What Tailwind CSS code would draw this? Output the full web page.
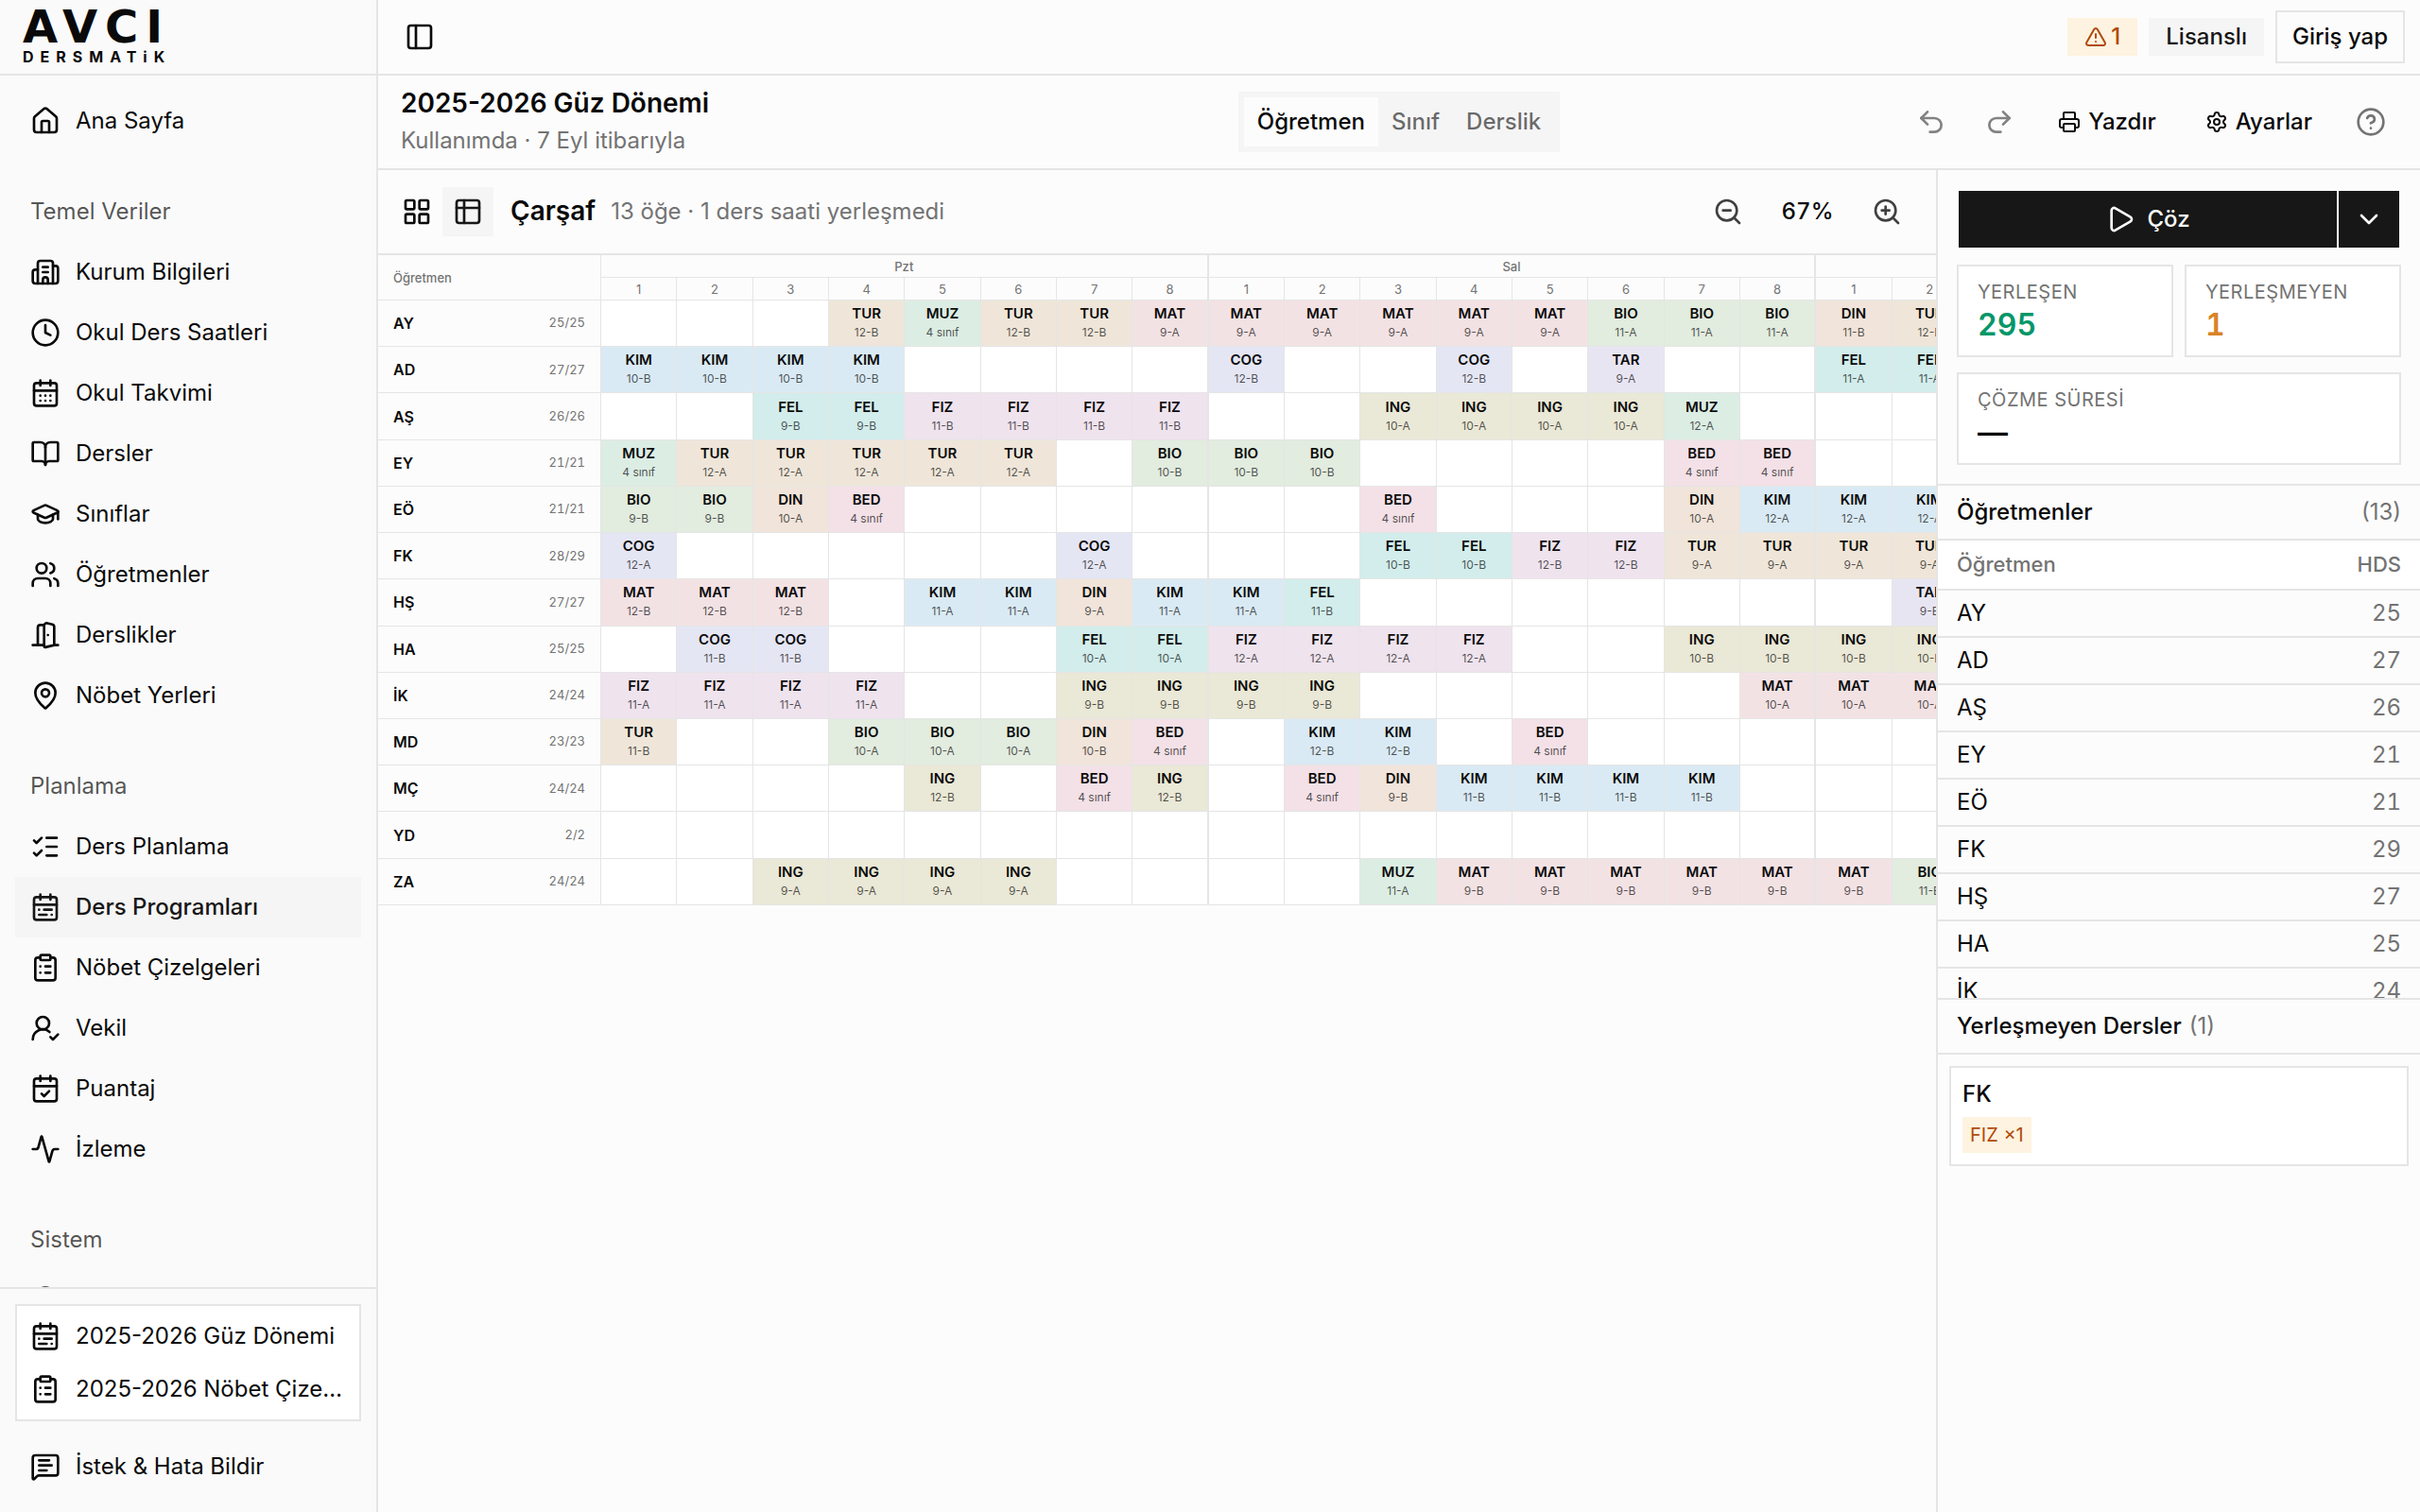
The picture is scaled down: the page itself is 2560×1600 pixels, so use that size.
<!DOCTYPE html>
<html lang="tr">
<head>
  <meta charset="UTF-8" />
  <meta name="viewport" content="width=device-width, initial-scale=1.0" />
  <title>Avcı Dersmatik - Ders Programları</title>
  <script src="https://cdn.jsdelivr.net/npm/@tailwindcss/browser@4"></script>
</head>
<body class="flex h-screen overflow-hidden bg-[#fcfcfc] font-['Inter',sans-serif] text-2xl text-neutral-950">

  <!-- Icon sprite -->
  <svg class="hidden">
    <symbol id="i-home" viewBox="0 0 24 24"><path d="M15 21v-8a1 1 0 0 0-1-1h-4a1 1 0 0 0-1 1v8" /><path d="M3 10a2 2 0 0 1 .709-1.528l7-6a2 2 0 0 1 2.582 0l7 6A2 2 0 0 1 21 10v9a2 2 0 0 1-2 2H5a2 2 0 0 1-2-2z" /></symbol>
    <symbol id="i-building" viewBox="0 0 24 24"><path d="M10 12h4" /><path d="M10 8h4" /><path d="M14 21v-3a2 2 0 0 0-4 0v3" /><path d="M6 10H4a2 2 0 0 0-2 2v7a2 2 0 0 0 2 2h16a2 2 0 0 0 2-2V9a2 2 0 0 0-2-2h-2" /><path d="M6 21V5a2 2 0 0 1 2-2h8a2 2 0 0 1 2 2v16" /></symbol>
    <symbol id="i-clock" viewBox="0 0 24 24"><circle cx="12" cy="12" r="10" /><path d="M12 6v6l4 2" /></symbol>
    <symbol id="i-calendar-days" viewBox="0 0 24 24"><path d="M8 2v4M16 2v4M3 10h18" /><rect x="3" y="4" width="18" height="18" rx="2" /><path d="M8 14h.01M12 14h.01M16 14h.01M8 18h.01M12 18h.01M16 18h.01" /></symbol>
    <symbol id="i-book" viewBox="0 0 24 24"><path d="M12 7v14" /><path d="M3 18a1 1 0 0 1-1-1V4a1 1 0 0 1 1-1h5a4 4 0 0 1 4 4 4 4 0 0 1 4-4h5a1 1 0 0 1 1 1v13a1 1 0 0 1-1 1h-6a3 3 0 0 0-3 3 3 3 0 0 0-3-3z" /></symbol>
    <symbol id="i-cap" viewBox="0 0 24 24"><path d="M21.42 10.922a1 1 0 0 0-.019-1.838L12.83 5.18a2 2 0 0 0-1.66 0L2.6 9.08a1 1 0 0 0 0 1.832l8.57 3.908a2 2 0 0 0 1.66 0z" /><path d="M22 10v6" /><path d="M6 12.5V16a6 3 0 0 0 12 0v-3.5" /></symbol>
    <symbol id="i-users" viewBox="0 0 24 24"><path d="M16 21v-2a4 4 0 0 0-4-4H6a4 4 0 0 0-4 4v2" /><path d="M16 3.128a4 4 0 0 1 0 7.744" /><path d="M22 21v-2a4 4 0 0 0-3-3.87" /><circle cx="9" cy="7" r="4" /></symbol>
    <symbol id="i-door" viewBox="0 0 24 24"><path d="M11 20H2" /><path d="M11 4.562v16.157a1 1 0 0 0 1.242.97L19 20V5.562a2 2 0 0 0-1.515-1.94l-4-1A2 2 0 0 0 11 4.561z" /><path d="M11 4H8a2 2 0 0 0-2 2v14" /><path d="M14 12h.01" /><path d="M22 20h-3" /></symbol>
    <symbol id="i-pin" viewBox="0 0 24 24"><path d="M20 10c0 4.993-5.539 10.193-7.399 11.799a1 1 0 0 1-1.202 0C9.539 20.193 4 14.993 4 10a8 8 0 0 1 16 0" /><circle cx="12" cy="10" r="3" /></symbol>
    <symbol id="i-list-checks" viewBox="0 0 24 24"><path d="M13 5h8M13 12h8M13 19h8" /><path d="m3 17 2 2 4-4" /><path d="m3 7 2 2 4-4" /></symbol>
    <symbol id="i-calendar-range" viewBox="0 0 24 24"><rect x="3" y="4" width="18" height="18" rx="2" /><path d="M16 2v4M3 10h18M8 2v4" /><path d="M17 14h-6M13 18H7M7 14h.01M17 18h.01" /></symbol>
    <symbol id="i-clipboard" viewBox="0 0 24 24"><rect x="8" y="2" width="8" height="4" rx="1" /><path d="M16 4h2a2 2 0 0 1 2 2v14a2 2 0 0 1-2 2H6a2 2 0 0 1-2-2V6a2 2 0 0 1 2-2h2" /><path d="M12 11h4M12 16h4M8 11h.01M8 16h.01" /></symbol>
    <symbol id="i-user-check" viewBox="0 0 24 24"><path d="M2 21a8 8 0 0 1 13.292-6" /><circle cx="10" cy="8" r="5" /><path d="m16 19 2 2 4-4" /></symbol>
    <symbol id="i-calendar-check" viewBox="0 0 24 24"><path d="M8 2v4M16 2v4M3 10h18" /><rect x="3" y="4" width="18" height="18" rx="2" /><path d="m9 16 2 2 4-4" /></symbol>
    <symbol id="i-activity" viewBox="0 0 24 24"><path d="M22 12h-2.48a2 2 0 0 0-1.93 1.46l-2.35 8.36a.25.25 0 0 1-.48 0L9.24 2.18a.25.25 0 0 0-.48 0l-2.35 8.36A2 2 0 0 1 4.49 12H2" /></symbol>
    <symbol id="i-message" viewBox="0 0 24 24"><path d="M22 17a2 2 0 0 1-2 2H6.828a2 2 0 0 0-1.414.586l-2.202 2.202A.71.71 0 0 1 2 21.286V5a2 2 0 0 1 2-2h16a2 2 0 0 1 2 2z" /><path d="M7 11h10M7 15h6M7 7h8" /></symbol>
    <symbol id="i-panel" viewBox="0 0 24 24"><rect x="3" y="3" width="18" height="18" rx="2" /><path d="M9 3v18" /></symbol>
    <symbol id="i-alert" viewBox="0 0 24 24"><path d="m21.73 18-8-14a2 2 0 0 0-3.48 0l-8 14A2 2 0 0 0 4 21h16a2 2 0 0 0 1.73-3" /><path d="M12 9v4M12 17h.01" /></symbol>
    <symbol id="i-undo" viewBox="0 0 24 24"><path d="M9 14 4 9l5-5" /><path d="M4 9h10.5a5.5 5.5 0 0 1 0 11H11" /></symbol>
    <symbol id="i-redo" viewBox="0 0 24 24"><path d="m15 14 5-5-5-5" /><path d="M20 9H9.500a5.500 5.500 0 0 0 0 11H13" /></symbol>
    <symbol id="i-printer" viewBox="0 0 24 24"><path d="M6 18H4a2 2 0 0 1-2-2v-5a2 2 0 0 1 2-2h16a2 2 0 0 1 2 2v5a2 2 0 0 1-2 2h-2" /><path d="M6 9V3a1 1 0 0 1 1-1h10a1 1 0 0 1 1 1v6" /><rect x="6" y="14" width="12" height="8" rx="1" /></symbol>
    <symbol id="i-settings" viewBox="0 0 24 24"><path d="M9.671 4.136a2.34 2.34 0 0 1 4.659 0 2.34 2.34 0 0 0 3.319 1.915 2.34 2.34 0 0 1 2.33 4.033 2.34 2.34 0 0 0 0 3.831 2.34 2.34 0 0 1-2.33 4.033 2.34 2.34 0 0 0-3.319 1.915 2.34 2.34 0 0 1-4.659 0 2.34 2.34 0 0 0-3.32-1.915 2.34 2.34 0 0 1-2.33-4.033 2.34 2.34 0 0 0 0-3.831A2.34 2.34 0 0 1 6.35 6.051a2.34 2.34 0 0 0 3.319-1.915" /><circle cx="12" cy="12" r="3" /></symbol>
    <symbol id="i-help" viewBox="0 0 24 24"><circle cx="12" cy="12" r="10" /><path d="M9.09 9a3 3 0 0 1 5.83 1c0 2-3 3-3 3" /><path d="M12 17h.01" /></symbol>
    <symbol id="i-grid" viewBox="0 0 24 24"><rect x="3" y="3" width="7" height="7" rx="1" /><rect x="14" y="3" width="7" height="7" rx="1" /><rect x="14" y="14" width="7" height="7" rx="1" /><rect x="3" y="14" width="7" height="7" rx="1" /></symbol>
    <symbol id="i-sheet" viewBox="0 0 24 24"><rect x="3" y="3" width="18" height="18" rx="2" /><path d="M9 3v18M3 9h18" /></symbol>
    <symbol id="i-zoom-out" viewBox="0 0 24 24"><circle cx="11" cy="11" r="8" /><path d="m21 21-4.340-4.340M8 11h6" /></symbol>
    <symbol id="i-zoom-in" viewBox="0 0 24 24"><circle cx="11" cy="11" r="8" /><path d="m21 21-4.340-4.340M8 11h6M11 8v6" /></symbol>
    <symbol id="i-play" viewBox="0 0 24 24"><path d="M5 5a2 2 0 0 1 3.008-1.728l11.997 6.998a2 2 0 0 1 .003 3.458l-12 7A2 2 0 0 1 5 19z" /></symbol>
    <symbol id="i-chevron" viewBox="0 0 24 24"><path d="m6 9 6 6 6-6" /></symbol>
  </svg>

  <!-- Sidebar -->
  <aside class="flex w-[400px] shrink-0 flex-col border-r-2 border-neutral-200 bg-[#fafafa]">
    <a href="#" class="flex h-20 shrink-0 flex-col border-b-2 border-neutral-200 pt-1 pl-6 font-bold">
      <span class="font-['DejaVu_Sans',sans-serif] text-5xl leading-[48px] tracking-[8px]">AVCI</span>
      <span class="text-base leading-4 tracking-[7px]">DERSMATiK</span>
    </a>

    <nav class="min-h-0 flex-1 overflow-hidden px-4 pt-4">
      <a href="#" class="flex h-16 items-center gap-4 px-4"><svg class="size-8 fill-none stroke-current stroke-2 [stroke-linecap:round] [stroke-linejoin:round]"><use href="#i-home" /></svg>Ana Sayfa</a>

      <h3 class="mt-8 flex h-16 items-center px-4 text-neutral-950/70">Temel Veriler</h3>
      <a href="#" class="flex h-16 items-center gap-4 px-4"><svg class="size-8 fill-none stroke-current stroke-2 [stroke-linecap:round] [stroke-linejoin:round]"><use href="#i-building" /></svg>Kurum Bilgileri</a>
      <a href="#" class="flex h-16 items-center gap-4 px-4"><svg class="size-8 fill-none stroke-current stroke-2 [stroke-linecap:round] [stroke-linejoin:round]"><use href="#i-clock" /></svg>Okul Ders Saatleri</a>
      <a href="#" class="flex h-16 items-center gap-4 px-4"><svg class="size-8 fill-none stroke-current stroke-2 [stroke-linecap:round] [stroke-linejoin:round]"><use href="#i-calendar-days" /></svg>Okul Takvimi</a>
      <a href="#" class="flex h-16 items-center gap-4 px-4"><svg class="size-8 fill-none stroke-current stroke-2 [stroke-linecap:round] [stroke-linejoin:round]"><use href="#i-book" /></svg>Dersler</a>
      <a href="#" class="flex h-16 items-center gap-4 px-4"><svg class="size-8 fill-none stroke-current stroke-2 [stroke-linecap:round] [stroke-linejoin:round]"><use href="#i-cap" /></svg>Sınıflar</a>
      <a href="#" class="flex h-16 items-center gap-4 px-4"><svg class="size-8 fill-none stroke-current stroke-2 [stroke-linecap:round] [stroke-linejoin:round]"><use href="#i-users" /></svg>Öğretmenler</a>
      <a href="#" class="flex h-16 items-center gap-4 px-4"><svg class="size-8 fill-none stroke-current stroke-2 [stroke-linecap:round] [stroke-linejoin:round]"><use href="#i-door" /></svg>Derslikler</a>
      <a href="#" class="flex h-16 items-center gap-4 px-4"><svg class="size-8 fill-none stroke-current stroke-2 [stroke-linecap:round] [stroke-linejoin:round]"><use href="#i-pin" /></svg>Nöbet Yerleri</a>

      <h3 class="mt-8 flex h-16 items-center px-4 text-neutral-950/70">Planlama</h3>
      <a href="#" class="flex h-16 items-center gap-4 px-4"><svg class="size-8 fill-none stroke-current stroke-2 [stroke-linecap:round] [stroke-linejoin:round]"><use href="#i-list-checks" /></svg>Ders Planlama</a>
      <a href="#" class="flex h-16 items-center gap-4 bg-neutral-100 px-4 font-medium text-neutral-900" aria-current="page"><svg class="size-8 fill-none stroke-current stroke-2 [stroke-linecap:round] [stroke-linejoin:round]"><use href="#i-calendar-range" /></svg>Ders Programları</a>
      <a href="#" class="flex h-16 items-center gap-4 px-4"><svg class="size-8 fill-none stroke-current stroke-2 [stroke-linecap:round] [stroke-linejoin:round]"><use href="#i-clipboard" /></svg>Nöbet Çizelgeleri</a>
      <a href="#" class="flex h-16 items-center gap-4 px-4"><svg class="size-8 fill-none stroke-current stroke-2 [stroke-linecap:round] [stroke-linejoin:round]"><use href="#i-user-check" /></svg>Vekil</a>
      <a href="#" class="flex h-16 items-center gap-4 px-4"><svg class="size-8 fill-none stroke-current stroke-2 [stroke-linecap:round] [stroke-linejoin:round]"><use href="#i-calendar-check" /></svg>Puantaj</a>
      <a href="#" class="flex h-16 items-center gap-4 px-4"><svg class="size-8 fill-none stroke-current stroke-2 [stroke-linecap:round] [stroke-linejoin:round]"><use href="#i-activity" /></svg>İzleme</a>

      <h3 class="mt-8 flex h-16 items-center px-4 text-neutral-950/70">Sistem</h3>
      <a href="#" class="flex h-16 items-center gap-4 px-4" aria-label="Yardım"><svg class="size-8 fill-none stroke-current stroke-2 [stroke-linecap:round] [stroke-linejoin:round]"><use href="#i-help" /></svg></a>
    </nav>

    <div class="flex flex-col gap-4 border-t-2 border-neutral-200 p-4">
      <div class="border-2 border-neutral-200 bg-white py-1">
        <a href="#" class="flex h-14 items-center gap-4 px-3.5"><svg class="size-8 shrink-0 fill-none stroke-current stroke-2 [stroke-linecap:round] [stroke-linejoin:round]"><use href="#i-calendar-range" /></svg><span class="truncate">2025-2026 Güz Dönemi</span></a>
        <a href="#" class="flex h-14 items-center gap-4 px-3.5"><svg class="size-8 shrink-0 fill-none stroke-current stroke-2 [stroke-linecap:round] [stroke-linejoin:round]"><use href="#i-clipboard" /></svg><span class="truncate">2025-2026 Nöbet Çizelgesi</span></a>
      </div>
      <a href="#" class="flex h-16 items-center gap-4 px-4"><svg class="size-8 fill-none stroke-current stroke-2 [stroke-linecap:round] [stroke-linejoin:round]"><use href="#i-message" /></svg>İstek &amp; Hata Bildir</a>
    </div>
  </aside>

  <div class="flex min-w-0 flex-1 flex-col">
    <!-- Top bar -->
    <header class="flex h-20 shrink-0 items-center gap-3 border-b-2 border-neutral-200 px-4 font-medium">
      <button class="mr-auto flex size-14 items-center justify-center" aria-label="Kenar çubuğu"><svg class="size-8 fill-none stroke-current stroke-2 [stroke-linecap:round] [stroke-linejoin:round]"><use href="#i-panel" /></svg></button>
      <button class="flex h-10 items-center gap-1 bg-[#fef3e0] px-[18px] text-[#b04a0c]"><svg class="size-6 fill-none stroke-current stroke-2 [stroke-linecap:round] [stroke-linejoin:round]"><use href="#i-alert" /></svg>1</button>
      <span class="flex h-10 items-center bg-neutral-100 px-[18px] text-neutral-900">Lisanslı</span>
      <button class="h-14 border-2 border-neutral-200 px-4">Giriş yap</button>
    </header>

    <!-- Schedule header -->
    <div class="grid h-[100px] shrink-0 grid-cols-[1fr_auto_1fr] items-center border-b-2 border-neutral-200 px-6">
      <div class="leading-10">
        <h1 class="text-[28px] leading-10 font-semibold">2025-2026 Güz Dönemi</h1>
        <p class="text-neutral-500">Kullanımda · 7 Eyl itibarıyla</p>
      </div>
      <div class="flex h-16 items-center bg-neutral-100 px-1.5 font-medium text-neutral-950/60">
        <button class="h-[52px] bg-[#fcfcfc] px-3.5 text-neutral-950">Öğretmen</button>
        <button class="h-[52px] px-3.5">Sınıf</button>
        <button class="h-[52px] px-3.5">Derslik</button>
      </div>
      <div class="-mr-1 flex items-center justify-end gap-2 font-medium">
        <button class="flex size-16 items-center justify-center opacity-50" disabled aria-label="Geri al"><svg class="size-8 fill-none stroke-current stroke-2 [stroke-linecap:round] [stroke-linejoin:round]"><use href="#i-undo" /></svg></button>
        <button class="flex size-16 items-center justify-center opacity-50" disabled aria-label="Yinele"><svg class="size-8 fill-none stroke-current stroke-2 [stroke-linecap:round] [stroke-linejoin:round]"><use href="#i-redo" /></svg></button>
        <button class="flex h-14 items-center gap-2 px-[22px]"><svg class="size-6 fill-none stroke-current stroke-2 [stroke-linecap:round] [stroke-linejoin:round]"><use href="#i-printer" /></svg>Yazdır</button>
        <button class="flex h-14 items-center gap-2 px-[22px]"><svg class="size-6 fill-none stroke-current stroke-2 [stroke-linecap:round] [stroke-linejoin:round]"><use href="#i-settings" /></svg>Ayarlar</button>
        <button class="flex size-16 items-center justify-center text-neutral-500" aria-label="Yardım"><svg class="size-8 fill-none stroke-current stroke-2 [stroke-linecap:round] [stroke-linejoin:round]"><use href="#i-help" /></svg></button>
      </div>
    </div>

    <div class="flex min-h-0 flex-1">
      <main class="flex min-w-0 flex-1 flex-col">
        <!-- View toolbar -->
        <div class="flex h-[90px] shrink-0 items-center border-b-2 border-neutral-200 pr-6 pl-3.5">
          <button class="flex h-[52px] w-[54px] items-center justify-center" aria-label="Kartlar"><svg class="size-8 fill-none stroke-current stroke-2 [stroke-linecap:round] [stroke-linejoin:round]"><use href="#i-grid" /></svg></button>
          <button class="flex h-[52px] w-[54px] items-center justify-center bg-neutral-100 text-neutral-900" aria-label="Çarşaf"><svg class="size-8 fill-none stroke-current stroke-2 [stroke-linecap:round] [stroke-linejoin:round]"><use href="#i-sheet" /></svg></button>
          <h2 class="ml-[18px] text-[28px] font-semibold">Çarşaf</h2>
          <p class="ml-4 text-neutral-500">13 öğe · 1 ders saati yerleşmedi</p>
          <div class="ml-auto flex items-center">
            <button class="flex size-14 items-center justify-center text-neutral-700" aria-label="Uzaklaştır"><svg class="size-8 fill-none stroke-current stroke-2 [stroke-linecap:round] [stroke-linejoin:round]"><use href="#i-zoom-out" /></svg></button>
            <span class="w-28 text-center font-medium tabular-nums">67%</span>
            <button class="flex size-14 items-center justify-center text-neutral-700" aria-label="Yakınlaştır"><svg class="size-8 fill-none stroke-current stroke-2 [stroke-linecap:round] [stroke-linejoin:round]"><use href="#i-zoom-in" /></svg></button>
          </div>
        </div>

        <!-- Timetable -->
        <div class="min-h-0 flex-1 overflow-hidden">
          <table class="h-[688px] w-[2164px] table-fixed border-separate border-spacing-0">
            <colgroup id="cols"><col class="w-[236px]" /></colgroup>
            <thead class="text-[13px] leading-5 text-neutral-500">
              <tr id="dayRow" class="h-6">
                <th rowspan="2" class="border-r border-b border-neutral-200 px-4 text-left font-medium">Öğretmen</th>
              </tr>
              <tr id="hourRow" class="h-6"></tr>
            </thead>
            <tbody id="timetable" class="text-center"></tbody>
          </table>
        </div>
      </main>

      <!-- Solver panel -->
      <aside class="flex w-[512px] shrink-0 flex-col border-l-2 border-neutral-200">
        <div class="flex flex-col gap-4 p-5">
          <div class="flex border-2 border-transparent font-medium text-neutral-50">
            <button class="flex h-[60px] flex-1 items-center justify-center gap-3 bg-neutral-900"><svg class="size-8 fill-none stroke-current stroke-2 [stroke-linecap:round] [stroke-linejoin:round]"><use href="#i-play" /></svg>Çöz</button>
            <button class="ml-0.5 flex h-[60px] w-16 items-center justify-center bg-neutral-900" aria-label="Çözme seçenekleri"><svg class="size-8 fill-none stroke-current stroke-2 [stroke-linecap:round] [stroke-linejoin:round]"><use href="#i-chevron" /></svg></button>
          </div>
          <dl class="grid grid-cols-2 gap-x-3 gap-y-4">
            <div class="border-2 border-neutral-200 bg-white px-5 py-3">
              <dt class="text-xl leading-[30px] tracking-wide text-neutral-500">YERLEŞEN</dt>
              <dd class="text-[32px] leading-10 font-semibold text-[#059669] tabular-nums">295</dd>
            </div>
            <div class="border-2 border-neutral-200 bg-white px-5 py-3">
              <dt class="text-xl leading-[30px] tracking-wide text-neutral-500">YERLEŞMEYEN</dt>
              <dd class="text-[32px] leading-10 font-semibold text-[#d98328] tabular-nums">1</dd>
            </div>
            <div class="col-span-2 border-2 border-neutral-200 bg-white px-5 py-3">
              <dt class="text-xl leading-[30px] tracking-wide text-neutral-500">ÇÖZME SÜRESİ</dt>
              <dd class="text-[32px] leading-10 font-semibold tabular-nums">—</dd>
            </div>
          </dl>
        </div>

        <section class="flex min-h-0 flex-1 flex-col border-t-2 border-neutral-200">
          <h3 class="flex h-[58px] shrink-0 items-center justify-between border-b-2 border-neutral-200 px-5 font-medium">Öğretmenler <span class="font-normal text-neutral-500">(13)</span></h3>
          <div class="min-h-0 flex-1 overflow-hidden">
            <table class="w-full border-separate border-spacing-0">
              <thead class="bg-white text-[22px] text-neutral-500">
                <tr class="h-[53px]">
                  <th class="border-b-2 border-neutral-200 px-5 text-left font-medium">Öğretmen</th>
                  <th class="border-b-2 border-neutral-200 px-5 text-right font-medium">HDS</th>
                </tr>
              </thead>
              <tbody id="teachers"></tbody>
            </table>
          </div>
        </section>

        <section class="flex min-h-0 flex-1 flex-col border-t-2 border-neutral-200">
          <h3 class="flex h-[58px] shrink-0 items-center gap-2 border-b-2 border-neutral-200 px-5 font-medium">Yerleşmeyen Dersler <span class="font-normal text-neutral-500">(1)</span></h3>
          <div class="p-3">
            <div class="flex flex-col items-start gap-2 border-2 border-neutral-200 bg-white p-3">
              <p class="leading-8 font-medium">FK</p>
              <span class="bg-[#fef3e0] px-2 text-xl leading-[38px] text-[#b04a0c]">FIZ ×1</span>
            </div>
          </div>
        </section>
      </aside>
    </div>
  </div>

  <script>
    const DAYS = ['Pzt', 'Sal', 'Çar'];
    const HOURS = 8;

    const LESSON_BG = {
      TUR: 'bg-[#efe6d9]',
      MUZ: 'bg-[#dcede4]',
      MAT: 'bg-[#f3e2e4]',
      BIO: 'bg-[#e2ecdf]',
      KIM: 'bg-[#daeaf4]',
      COG: 'bg-[#e5e6f4]',
      TAR: 'bg-[#e8e5f3]',
      FEL: 'bg-[#d2edeb]',
      FIZ: 'bg-[#efe3ee]',
      ING: 'bg-[#eae8d6]',
      DIN: 'bg-[#f1e4da]',
      BED: 'bg-[#f3e1e7]'
    };

    // blocks: [first slot, slot count, lesson, class]
    const teachers = [
      { name: 'AY', placed: 25, total: 25, blocks: [[4, 1, 'TUR', '12-B'], [5, 1, 'MUZ', '4 sınıf'], [6, 2, 'TUR', '12-B'], [8, 6, 'MAT', '9-A'], [14, 3, 'BIO', '11-A'], [17, 1, 'DIN', '11-B'], [18, 1, 'TUR', '12-B']] },
      { name: 'AD', placed: 27, total: 27, blocks: [[1, 4, 'KIM', '10-B'], [9, 1, 'COG', '12-B'], [12, 1, 'COG', '12-B'], [14, 1, 'TAR', '9-A'], [17, 2, 'FEL', '11-A']] },
      { name: 'AŞ', placed: 26, total: 26, blocks: [[3, 2, 'FEL', '9-B'], [5, 4, 'FIZ', '11-B'], [11, 4, 'ING', '10-A'], [15, 1, 'MUZ', '12-A']] },
      { name: 'EY', placed: 21, total: 21, blocks: [[1, 1, 'MUZ', '4 sınıf'], [2, 5, 'TUR', '12-A'], [8, 3, 'BIO', '10-B'], [15, 2, 'BED', '4 sınıf']] },
      { name: 'EÖ', placed: 21, total: 21, blocks: [[1, 2, 'BIO', '9-B'], [3, 1, 'DIN', '10-A'], [4, 1, 'BED', '4 sınıf'], [11, 1, 'BED', '4 sınıf'], [15, 1, 'DIN', '10-A'], [16, 3, 'KIM', '12-A']] },
      { name: 'FK', placed: 28, total: 29, blocks: [[1, 1, 'COG', '12-A'], [7, 1, 'COG', '12-A'], [11, 2, 'FEL', '10-B'], [13, 2, 'FIZ', '12-B'], [15, 4, 'TUR', '9-A']] },
      { name: 'HŞ', placed: 27, total: 27, blocks: [[1, 3, 'MAT', '12-B'], [5, 2, 'KIM', '11-A'], [7, 1, 'DIN', '9-A'], [8, 2, 'KIM', '11-A'], [10, 1, 'FEL', '11-B'], [18, 1, 'TAR', '9-B']] },
      { name: 'HA', placed: 25, total: 25, blocks: [[2, 2, 'COG', '11-B'], [7, 2, 'FEL', '10-A'], [9, 4, 'FIZ', '12-A'], [15, 4, 'ING', '10-B']] },
      { name: 'İK', placed: 24, total: 24, blocks: [[1, 4, 'FIZ', '11-A'], [7, 4, 'ING', '9-B'], [16, 3, 'MAT', '10-A']] },
      { name: 'MD', placed: 23, total: 23, blocks: [[1, 1, 'TUR', '11-B'], [4, 3, 'BIO', '10-A'], [7, 1, 'DIN', '10-B'], [8, 1, 'BED', '4 sınıf'], [10, 2, 'KIM', '12-B'], [13, 1, 'BED', '4 sınıf']] },
      { name: 'MÇ', placed: 24, total: 24, blocks: [[5, 1, 'ING', '12-B'], [7, 1, 'BED', '4 sınıf'], [8, 1, 'ING', '12-B'], [10, 1, 'BED', '4 sınıf'], [11, 1, 'DIN', '9-B'], [12, 4, 'KIM', '11-B']] },
      { name: 'YD', placed: 2, total: 2, blocks: [] },
      { name: 'ZA', placed: 24, total: 24, blocks: [[3, 4, 'ING', '9-A'], [11, 1, 'MUZ', '11-A'], [12, 6, 'MAT', '9-B'], [18, 1, 'BIO', '11-B']] }
    ];

    const slotCount = DAYS.length * HOURS;
    const edge = slot => slot % HOURS === 0 ? 'border-r-2' : 'border-r';

    DAYS.forEach(day => {
      document.getElementById('dayRow').innerHTML +=
        `<th colspan="${HOURS}" class="border-r-2 border-b border-neutral-200 font-medium">${day}</th>`;
    });

    for (let slot = 1; slot <= slotCount; slot++) {
      document.getElementById('cols').appendChild(document.createElement('col'));
      document.getElementById('hourRow').innerHTML +=
        `<th class="${edge(slot)} border-b border-neutral-200 font-normal">${(slot - 1) % HOURS + 1}</th>`;
    }

    document.getElementById('timetable').innerHTML = teachers.map(t => {
      const slots = {};
      t.blocks.forEach(([start, count, lesson, cls]) => {
        for (let i = 0; i < count; i++) slots[start + i] = { lesson, cls };
      });

      let cells = '';
      for (let slot = 1; slot <= slotCount; slot++) {
        const s = slots[slot];
        cells += s
          ? `<td class="${edge(slot)} border-b border-neutral-200 ${LESSON_BG[s.lesson]}">
               <div class="text-[15px] leading-5 font-semibold">${s.lesson}</div>
               <div class="text-xs leading-5 text-neutral-950/70">${s.cls}</div>
             </td>`
          : `<td class="${edge(slot)} border-b border-neutral-200 bg-white"></td>`;
      }

      return `<tr class="h-[49px]">
        <th class="border-r border-b border-neutral-200 px-4">
          <div class="flex items-center justify-between">
            <span class="text-base font-semibold">${t.name}</span>
            <span class="text-[13px] font-normal text-neutral-500 tabular-nums">${t.placed}/${t.total}</span>
          </div>
        </th>${cells}
      </tr>`;
    }).join('');

    document.getElementById('teachers').innerHTML = teachers.map(t => `
      <tr class="h-[50px]">
        <td class="border-b-2 border-neutral-200 px-5">${t.name}</td>
        <td class="border-b-2 border-neutral-200 px-5 text-right text-neutral-500 tabular-nums">${t.total}</td>
      </tr>`).join('');
  </script>
</body>
</html>
